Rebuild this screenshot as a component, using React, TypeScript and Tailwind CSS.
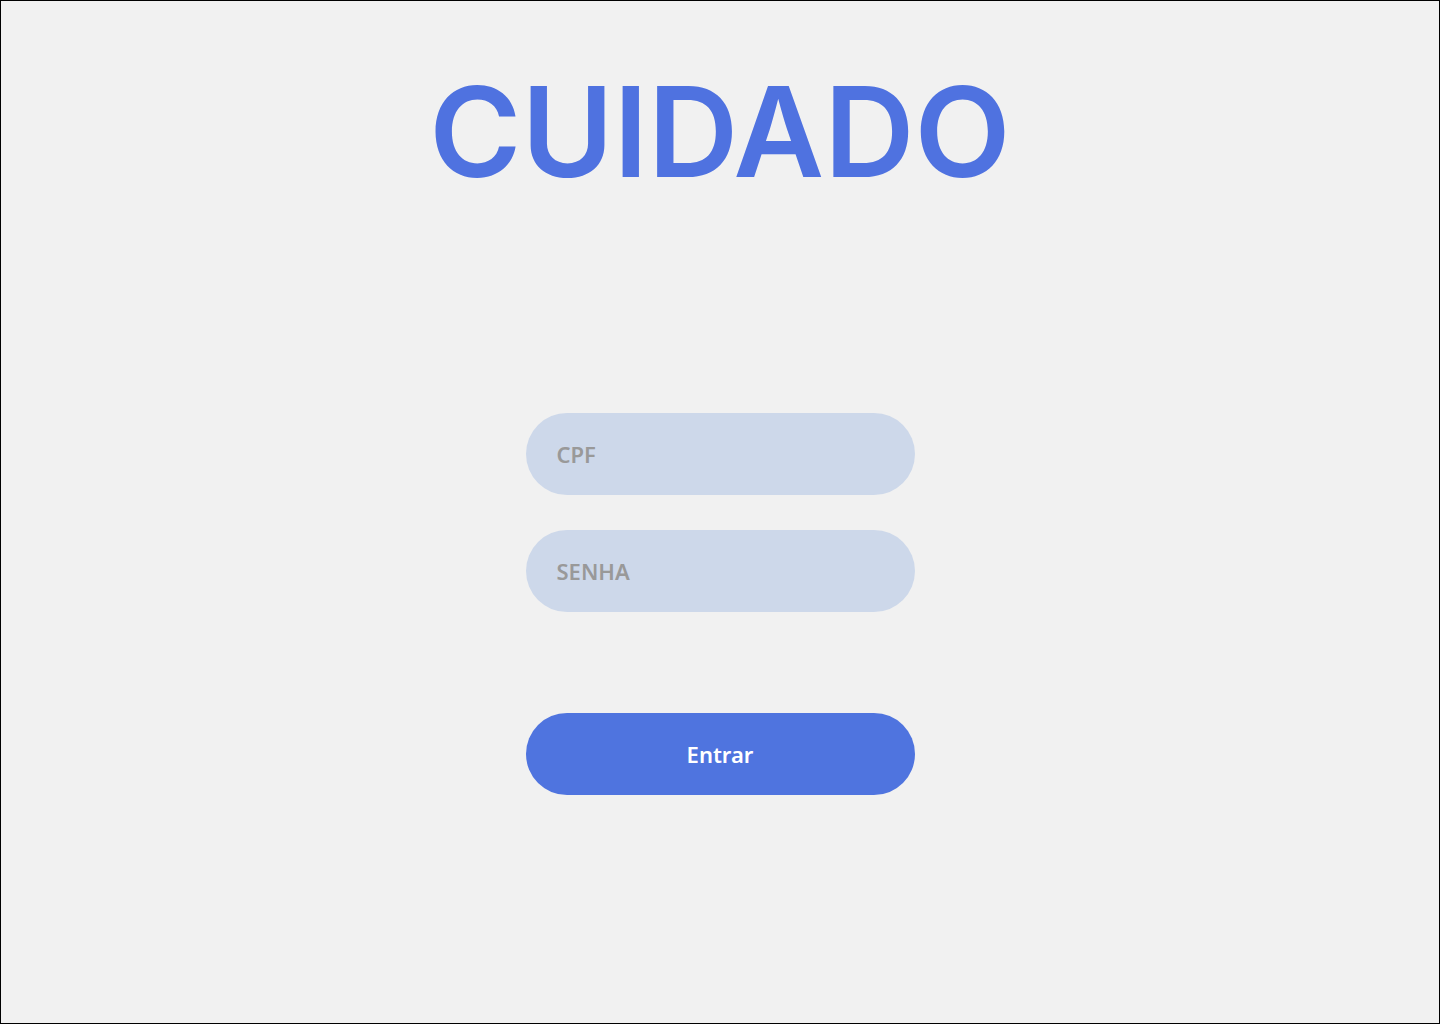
export default function App() {
  return (
    <div className="w-[1440px] h-[1024px] border border-black bg-[#f1f1f1] flex flex-col items-center overflow-hidden">
      <h1
        className="mt-[67px] text-[125px] leading-[128px] font-semibold text-[#4f72e0]"
        style={{ fontFamily: "Inter, 'Noto Sans', sans-serif" }}
      >
        CUIDADO
      </h1>
      <div className="mt-[217px] flex flex-col w-[389px]" style={{ fontFamily: "'Noto Sans', sans-serif" }}>
        <div className="h-[82px] rounded-full bg-[#cdd8ea] flex items-center pl-[31px] pt-[1px] text-[22px] font-semibold text-[#999999]">
          CPF
        </div>
        <div className="mt-[35px] h-[82px] rounded-full bg-[#cdd8ea] flex items-center pl-[31px] pt-[1px] text-[22px] font-semibold text-[#999999]">
          SENHA
        </div>
        <div className="mt-[101px] h-[82px] rounded-full bg-[#4f74df] flex items-center justify-center pt-[1px] text-[22px] font-semibold text-white">
          Entrar
        </div>
      </div>
    </div>
  );
}
